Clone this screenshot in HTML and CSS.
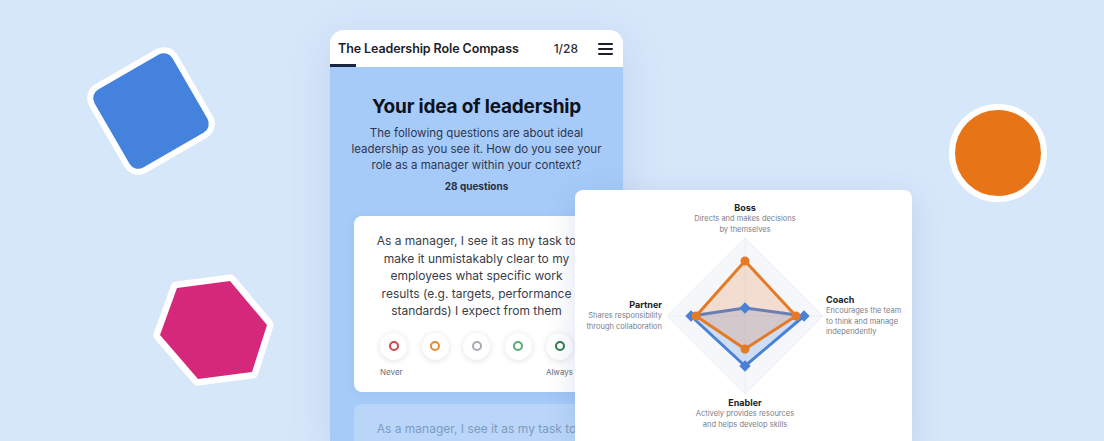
FILE: index.html
```html
<!DOCTYPE html>
<html lang="en">
<head>
  <meta charset="UTF-8">
  <meta name="viewport" content="width=device-width, initial-scale=1.0">
  <title>The Leadership Role Compass</title>
  <link rel="stylesheet" href="styles.css">
</head>
<body>
  <div class="stage">
    <!-- decorative shapes -->
    <div class="shape square"></div>
    <svg class="shape hexagon" width="150" height="140" viewBox="0 0 150 140">
      <polygon points="37,28 90,21 127,65 112,112 58,119 20,75" fill="#d5287a" stroke="#fff" stroke-width="13" stroke-linejoin="round" paint-order="stroke"/>
    </svg>
    <div class="shape dot"></div>

    <div class="phone">
      <div class="phone-head">
        <span class="phone-title">The Leadership Role Compass</span>
        <span class="phone-count">1/28</span>
        <span class="burger"><i></i><i></i><i></i></span>
        <span class="progress"></span>
      </div>
      <div class="phone-body">
        <h1>Your idea of leadership</h1>
        <p class="intro">The following questions are about ideal leadership as you see it. How do you see your role as a manager within your context?</p>
        <p class="count">28 questions</p>

        <div class="question">
          <p>As a manager, I see it as my task to make it unmistakably clear to my employees what specific work results (e.g. targets, performance standards) I expect from them</p>
          <div class="answers">
            <span class="answer"><i style="border-color: #d2454f;"></i></span>
            <span class="answer"><i style="border-color: #e8892f;"></i></span>
            <span class="answer"><i style="border-color: #a7a9b4;"></i></span>
            <span class="answer"><i style="border-color: #5aa774;"></i></span>
            <span class="answer"><i style="border-color: #2f7a4c;"></i></span>
          </div>
          <div class="scale"><span>Never</span><span>Always</span></div>
        </div>

        <div class="question faded">
          <p>As a manager, I see it as my task to</p>
        </div>
      </div>
    </div>

    <div class="chart-card">
      <svg class="radar" width="337" height="251" viewBox="0 0 337 251">
        <polygon points="170,48 248,126 170,204 92,126" fill="#f6f7fa" stroke="#eceef3" stroke-width="1"/>
        <polygon points="170,87 209,126 170,165 131,126" fill="none" stroke="#eceef3" stroke-width="1"/>
        <line x1="170" y1="48" x2="170" y2="204" stroke="#eceef3"/>
        <line x1="92" y1="126" x2="248" y2="126" stroke="#eceef3"/>
        <polygon points="170,118 229,126 170,176 116,126" fill="rgba(70,130,222,0.22)" stroke="#4a80d6" stroke-width="3" stroke-linejoin="round"/>
        <polygon points="170,71 221,126 170,159 121,126" fill="rgba(232,120,40,0.2)" stroke="#e47a25" stroke-width="3" stroke-linejoin="round"/>
        <g fill="#4a80d6">
          <rect x="166" y="114" width="8" height="8" transform="rotate(45 170 118)"/>
          <rect x="225" y="122" width="8" height="8" transform="rotate(45 229 126)"/>
          <rect x="166" y="172" width="8" height="8" transform="rotate(45 170 176)"/>
          <rect x="112" y="122" width="8" height="8" transform="rotate(45 116 126)"/>
        </g>
        <g fill="#e47a25">
          <circle cx="170" cy="71" r="4.5"/>
          <circle cx="221" cy="126" r="4.5"/>
          <circle cx="170" cy="159" r="4.5"/>
          <circle cx="121" cy="126" r="4.5"/>
        </g>
      </svg>
      <div class="role role-top"><b>Boss</b><span>Directs and makes decisions<br>by themselves</span></div>
      <div class="role role-left"><b>Partner</b><span>Shares responsibility<br>through collaboration</span></div>
      <div class="role role-right"><b>Coach</b><span>Encourages the team<br>to think and manage<br>independently</span></div>
      <div class="role role-bottom"><b>Enabler</b><span>Actively provides resources<br>and helps develop skills</span></div>
    </div>
  </div>
</body>
</html>
```

FILE: styles.css
```css
body {
  margin: 0;
  font-family: Inter, "Noto Sans", sans-serif;
  background-color: #d7e7fa;
  color: #1b1d2a;
  overflow: hidden;
}
.stage {
  position: relative;
  width: 1104px;
  height: 441px;
  padding-top: 30px;
  box-sizing: border-box;
  overflow: hidden;
}
.shape {
  position: absolute;
}
.square {
  left: 100px;
  top: 60px;
  width: 90px;
  height: 90px;
  background-color: #4582de;
  border: 6px solid #fff;
  border-radius: 16px;
  transform: rotate(-30deg);
}
.hexagon {
  left: 140px;
  top: 260px;
}
.dot {
  left: 949px;
  top: 104px;
  width: 86px;
  height: 86px;
  background-color: #e87418;
  border: 6px solid #fff;
  border-radius: 50%;
}

.phone {
  margin-left: 330px;
  width: 293px;
  border-radius: 14px 14px 0 0;
  overflow: hidden;
  box-shadow: 0 10px 40px rgba(60, 100, 160, 0.15);
}
.phone-head {
  position: relative;
  height: 37px;
  display: flex;
  align-items: center;
  padding: 0 10px 0 8px;
  background-color: #fff;
}
.phone-title {
  flex: 1;
  font-size: 12.5px;
  font-weight: 600;
  letter-spacing: -0.1px;
}
.phone-count {
  font-size: 12px;
  font-weight: 500;
  margin-right: 20px;
  color: #2a2c38;
}
.burger {
  display: flex;
  flex-direction: column;
  gap: 3px;
  width: 15px;
}
.burger i {
  display: block;
  height: 2px;
  border-radius: 1px;
  background-color: #1b1d2a;
}
.progress {
  position: absolute;
  left: 0;
  bottom: 0;
  width: 26px;
  height: 3px;
  background-color: #1b2540;
}
.phone-body {
  background-color: #a6cbf8;
  padding: 28px 24px 0;
  height: 374px;
  box-sizing: border-box;
  text-align: center;
}
.phone-body h1 {
  margin: 0;
  font-size: 19px;
  font-weight: 700;
  letter-spacing: -0.2px;
  color: #10121c;
}
.intro {
  margin: 7px -5px 0;
  font-size: 11.5px;
  line-height: 16px;
  color: #2e3550;
}
.count {
  margin: 7px 0 0;
  font-size: 10px;
  font-weight: 700;
  color: #2a2f42;
}
.question {
  margin-top: 24px;
  background-color: #fff;
  border-radius: 8px;
  padding: 16px 16px 15px;
  box-shadow: 0 2px 10px rgba(60, 100, 160, 0.08);
}
.question p {
  margin: 0;
  font-size: 12px;
  line-height: 17.5px;
  color: #3a3d4a;
}
.answers {
  display: flex;
  justify-content: space-between;
  margin-top: 13px;
  padding: 0 10px;
}
.answer {
  width: 27px;
  height: 27px;
  border-radius: 50%;
  background-color: #fff;
  box-shadow: 0 1px 6px rgba(0, 0, 0, 0.12);
  display: flex;
  align-items: center;
  justify-content: center;
}
.answer i {
  width: 6px;
  height: 6px;
  border: 2.5px solid;
  border-radius: 50%;
}
.scale {
  display: flex;
  justify-content: space-between;
  margin-top: 7px;
  padding: 0 10px;
  font-size: 8px;
  color: #6b6e7a;
}
.question.faded {
  margin-top: 12px;
  background-color: #b9d6f9;
  box-shadow: none;
}
.question.faded p {
  color: #7f9bc0;
}

.chart-card {
  position: absolute;
  left: 575px;
  top: 190px;
  width: 337px;
  height: 251px;
  background-color: #fff;
  border-radius: 8px 8px 0 0;
  box-shadow: 0 8px 30px rgba(60, 100, 160, 0.18);
}
.radar {
  display: block;
}
.role {
  position: absolute;
  display: flex;
  flex-direction: column;
  font-size: 7.5px;
  line-height: 10.5px;
  color: #7b7e8a;
}
.role b {
  font-size: 9px;
  line-height: 12px;
  color: #1b1d2a;
}
.role-top {
  left: 70px;
  width: 200px;
  top: 12px;
  text-align: center;
  align-items: center;
}
.role-bottom {
  left: 70px;
  width: 200px;
  top: 207px;
  text-align: center;
  align-items: center;
}
.role-left {
  right: 250px;
  top: 109px;
  text-align: right;
  align-items: flex-end;
}
.role-right {
  left: 251px;
  top: 104px;
}
```
